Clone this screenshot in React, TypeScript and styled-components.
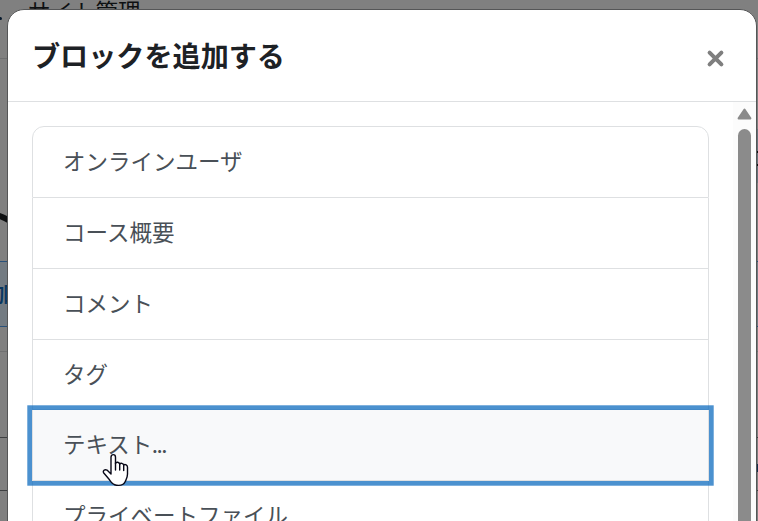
import React from "react";
import styled, { createGlobalStyle, css } from "styled-components";

const GlobalStyle = createGlobalStyle`
  *, *::before, *::after { box-sizing: border-box; }
  html, body { margin: 0; height: 100%; overflow: hidden; }
  body {
    background: #808080;
    color: #1d2125;
    font-family: "Noto Sans CJK JP", sans-serif;
    font-size: 22.5px;
    line-height: 1.5;
  }
`;

const Screen = styled.div`
  position: relative;
  width: 758px;
  height: 521px;
  overflow: hidden;
  background: #808080;
`;

const Underlay = styled.div`
  display: flex;
  flex-direction: column;
  width: 100%;
`;

const NavRow = styled.div`
  display: flex;
  height: 59px;
  border-bottom: 1px solid #6f7071;
  color: #0e1012;
`;

const NavLabel = styled.span`
  margin: -6px 0 0 28px;
  white-space: nowrap;
`;

const NavMark = styled.i`
  position: absolute;
  left: 0;
  top: 17px;
  width: 2px;
  height: 3px;
  border-radius: 0 2px 2px 0;
  background: #071a2d;
`;

const HeadingArea = styled.div`
  display: flex;
  justify-content: space-between;
  height: 202px;
`;

const HeadingStroke = styled.svg`
  margin-top: 151px;
  width: 8px;
  height: 18px;
`;

const EdgeButton = styled.div`
  display: flex;
  flex-direction: column;
  gap: 11px;
  margin-top: 70px;
  padding-top: 22px;
  width: 2px;
  height: 54px;
  background: #69737b;
`;

const EdgeLine = styled.span`
  height: 2px;
  background: #0e1012;
`;

const AddBar = styled.div`
  display: flex;
  align-items: center;
  height: 66px;
  padding-bottom: 2px;
  border-top: 1px solid #29517a;
  border-bottom: 1px solid #29517a;
  background: #737b82;
  color: #083660;
`;

const AddLabel = styled.span`
  margin-left: -8px;
  font-weight: 500;
  white-space: nowrap;
`;

const PlainRow = styled.div<{ $height: number; $line: string }>`
  height: ${(p) => p.$height}px;
  border-bottom: 1px solid ${(p) => p.$line};
`;

const EdgeDot = styled.i`
  position: absolute;
  right: 0;
  top: 464px;
  width: 1px;
  height: 8px;
  background: #152e4b;
`;

const Dialog = styled.section`
  position: absolute;
  left: 7px;
  top: 9px;
  display: flex;
  flex-direction: column;
  width: 750px;
  height: 540px;
  overflow: hidden;
  border: 1px solid #555657;
  border-radius: 17px;
  background: #fff;
`;

const DialogHeader = styled.header`
  display: flex;
  flex: none;
  align-items: center;
  justify-content: space-between;
  height: 92px;
  padding: 0 30px 0 24px;
  border-bottom: 1px solid #dee0e2;
`;

const Title = styled.h1`
  margin: 0 0 1px;
  font-size: 28.125px;
  font-weight: 700;
  line-height: 42px;
`;

const CloseButton = styled.button`
  display: flex;
  margin: 5px 0 0;
  padding: 0;
  border: 0;
  background: none;
`;

const DialogBody = styled.div`
  display: flex;
  flex: 1;
  min-height: 0;
`;

const ListArea = styled.div`
  flex: 1;
  padding: 24.25px 24px 0;
`;

const BlockList = styled.ul`
  display: flex;
  flex-direction: column;
  width: 677px;
  margin: 0;
  padding: 0;
  list-style: none;
`;

const BlockItem = styled.li<{ $focused?: boolean }>`
  flex: none;
  padding: 17px 30px 19px;
  border: 1px solid #dee0e2;
  border-top-width: 0;
  color: #495057;
  white-space: nowrap;
  &:first-child {
    border-top-width: 1px;
    border-radius: 12px 12px 0 0;
  }
  ${(p) =>
    p.$focused &&
    css`
      position: relative;
      background: #f8f9fa;
      box-shadow: 0 0 0 4.7px rgba(15, 108, 191, 0.75);
    `}
`;

const Dots = styled.span`
  letter-spacing: -1.4px;
  margin-left: -0.7px;
`;

const ScrollTrack = styled.div`
  display: flex;
  flex: none;
  flex-direction: column;
  align-items: center;
  gap: 9px;
  width: 23px;
  padding-top: 6px;
  background: #fcfcfc;
`;

const ScrollThumb = styled.div`
  width: 13px;
  flex: 1;
  border-radius: 7px 7px 0 0;
  background: #8b8b8b;
`;

const Pointer = styled.svg`
  position: absolute;
  left: 102px;
  top: 453px;
  width: 27px;
  height: 34px;
`;

const blocks = [
  { name: "オンラインユーザ" },
  { name: "コース概要" },
  { name: "コメント" },
  { name: "タグ" },
  { name: "テキスト", opensForm: true },
  { name: "プライベートファイル" },
];

export default function App() {
  return (
    <Screen>
      <GlobalStyle />
      <Underlay>
        <NavRow>
          <NavMark />
          <NavLabel>サイト管理</NavLabel>
        </NavRow>
        <HeadingArea>
          <HeadingStroke viewBox="0 0 8 18">
            <path d="M-3 5 Q3 7 10 11" fill="none" stroke="#0e1012" strokeWidth="6" />
          </HeadingStroke>
          <EdgeButton>
            <EdgeLine />
            <EdgeLine />
          </EdgeButton>
        </HeadingArea>
        <AddBar>
          <AddLabel>加</AddLabel>
        </AddBar>
        <PlainRow $height={25} $line="#6f7071" />
        <PlainRow $height={86} $line="#3e4042" />
        <PlainRow $height={53} $line="#3e4042" />
      </Underlay>
      <EdgeDot />
      <Dialog>
        <DialogHeader>
          <Title>ブロックを追加する</Title>
          <CloseButton aria-label="閉じる">
            <svg width="21" height="21" viewBox="0 0 21 21">
              <path
                d="M4.6 4.6 16.4 16.4M16.4 4.6 4.6 16.4"
                fill="none"
                stroke="#7f7f7f"
                strokeWidth="4"
                strokeLinecap="round"
              />
            </svg>
          </CloseButton>
        </DialogHeader>
        <DialogBody>
          <ListArea>
            <BlockList>
              {blocks.map(({ name, opensForm }) => (
                <BlockItem key={name} $focused={opensForm}>
                  {name}
                  {opensForm && <Dots>...</Dots>}
                </BlockItem>
              ))}
            </BlockList>
          </ListArea>
          <ScrollTrack>
            <svg width="15" height="12" viewBox="0 0 15 12">
              <path
                d="M7.5 1.6 13.4 10.4H1.6Z"
                fill="#8b8b8b"
                stroke="#8b8b8b"
                strokeWidth="2"
                strokeLinejoin="round"
              />
            </svg>
            <ScrollThumb />
          </ScrollTrack>
        </DialogBody>
      </Dialog>
      <Pointer viewBox="0 0 27 34">
        <path
          d="M9 21V4.2C9 .7 13.5.7 13.5 4.2V10.4C14.2 8.7 17.3 8.9 17.7 11.1C18.6 9.7 21.3 10.1 21.7 12C23.2 10.9 25.5 12 25.5 14.2V21C25.5 25 24.2 26.5 23 29C21.5 32 18 32.7 14.5 32.2C10.5 31.6 9.2 29.3 7.3 26.5L1.8 20C.4 18 2.7 15.8 5 17.1Z"
          fill="#fff"
          stroke="#080817"
          strokeWidth="1.4"
          strokeLinejoin="round"
        />
        <path d="M13.5 10V17M17.7 11V17M21.7 12V17.5" fill="none" stroke="#080817" strokeWidth="1.4" strokeLinecap="round" />
      </Pointer>
    </Screen>
  );
}
